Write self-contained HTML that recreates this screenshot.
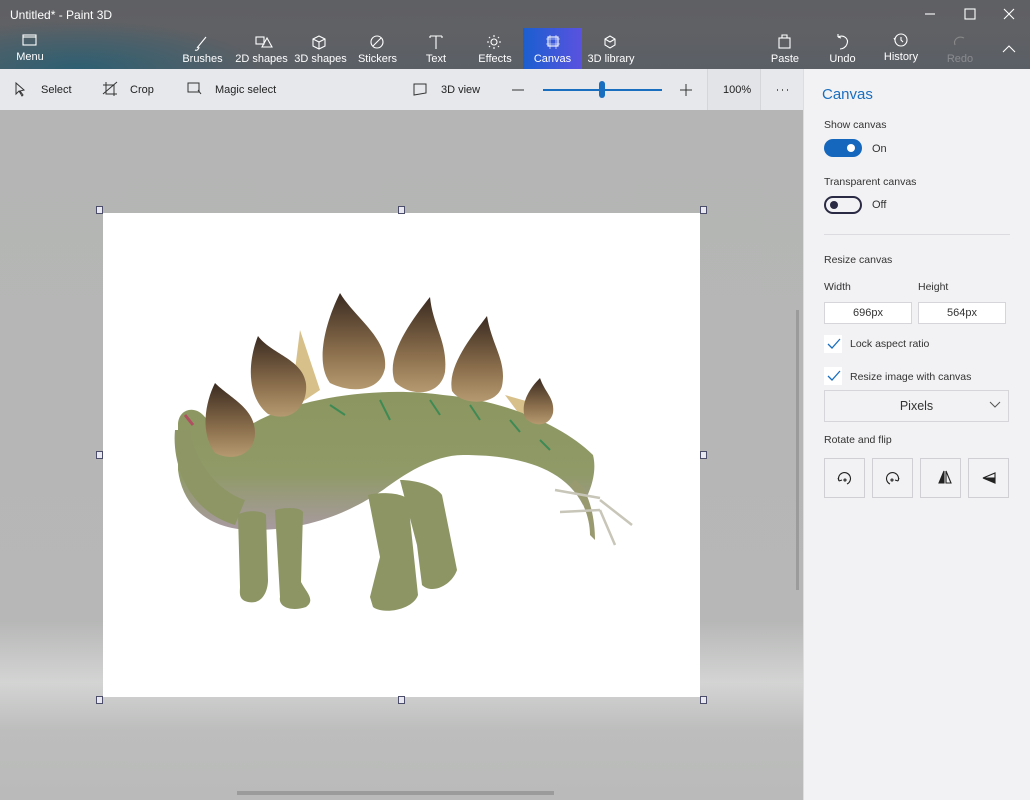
<!DOCTYPE html>
<html><head><meta charset="utf-8"><style>
*{margin:0;padding:0;box-sizing:border-box}
body{width:1030px;height:800px;overflow:hidden;position:relative;font-family:"Liberation Sans",sans-serif;background:#f2f2f4}
.hdr{position:absolute;left:0;top:0;width:1030px;height:69px;background:linear-gradient(180deg,#5f6063 0%,#606164 40%,#5a5f66 100%)}
.hdr:before{content:"";position:absolute;left:0;top:20px;width:260px;height:49px;background:radial-gradient(ellipse at 30% 100%,rgba(40,95,115,.9),rgba(60,85,100,0) 70%)}
.t{position:absolute;color:#fff;font-size:11px;text-align:center}
.ti{position:absolute;left:10px;top:8px;color:#fff;font-size:12px}
.tb{position:absolute;left:0;top:69px;width:803px;height:41px;background:#e6e8ec}
.tt{position:absolute;font-size:11px;color:#222}
.view{position:absolute;left:0;top:110px;width:803px;height:690px;background:linear-gradient(180deg,#b4b5b4 0%,#b6b7b6 74%,#d3d4d3 83%,#bcbdbc 90%,#b9bab9 100%)}
.cv{position:absolute;left:103px;top:213px;width:597px;height:484px;background:#fff}
.h{position:absolute;width:7px;height:8px;border:1.5px solid #4b4d6a;background:#e8e8f0}
.panel{position:absolute;left:803px;top:69px;width:227px;height:731px;background:#f2f2f4;border-left:1px solid #ddd}
.p{position:absolute;font-size:11px;color:#333}
.box{position:absolute;background:#fff;border:1px solid #d6d6da;font-size:11px;color:#333;text-align:center}
.btn{position:absolute;top:458px;width:41px;height:40px;border:1px solid #d0d0d4;background:#f2f2f4}
svg{position:absolute}
</style></head><body>
<div class="hdr"></div>
<div class="ti">Untitled* - Paint 3D</div>
<div style="position:absolute;left:523px;top:28px;width:59px;height:41px;background:linear-gradient(90deg,#1a5fd0,#5a52e0)"></div>
<svg style="left:0;top:0" width="1030" height="69" fill="none" stroke="#fff" stroke-width="1.1">
<rect x="23" y="35" width="13" height="10"/><path d="M23 37h13"/>
<path d="M197 48l9-11M195 50c2 1 4-1 4-3"/>
<rect x="256" y="37" width="8" height="7"/><path d="M262 47l5-9 5 9z"/>
<path d="M313 39l6-3 6 3v7l-6 3-6-3zM313 39l6 3 6-3M319 42v7"/>
<circle cx="377" cy="42" r="6"/><path d="M373 46l8-8"/>
<path d="M430 36h12M436 36v13M430 36v2M442 36v2"/>
<circle cx="494" cy="42" r="3"/><path d="M494 35v2M494 47v2M487 42h2M499 42h2M489 37l1 1M498 46l1 1M489 47l1-1M498 37l1 1"/>
<rect x="548" y="37" width="10" height="9"/><path d="M546 39h14M546 44h14M550 35v14M556 35v14" stroke-width=".6"/>
<path d="M605 39l5-3 5 3v6l-5 3-5-3zM605 39l5 3 5-3" />
<rect x="779" y="38" width="11" height="10"/><path d="M782 38v-3h5v3"/>
<path d="M838 37c6-3 11 2 9 7-1 3-4 5-7 5M838 37l0-3M838 37l3 1"/>
<circle cx="901" cy="40" r="6"/><path d="M901 37v3l2 2M895 40l-1-2"/>
<path d="M964 38c-6-3-11 2-9 7" stroke="#888"/>
<path d="M925 14h10"/><rect x="965" y="9" width="10" height="10"/><path d="M1004 9l10 10M1014 9l-10 10M1003 52l6-6 6 6"/>
</svg>
<div class="t" style="left:10px;top:51px;width:40px">Menu</div>
<div class="t" style="left:180px;top:53px;width:45px">Brushes</div>
<div class="t" style="left:234px;top:53px;width:55px">2D shapes</div>
<div class="t" style="left:293px;top:53px;width:55px">3D shapes</div>
<div class="t" style="left:355px;top:53px;width:45px">Stickers</div>
<div class="t" style="left:420px;top:53px;width:32px">Text</div>
<div class="t" style="left:475px;top:53px;width:40px">Effects</div>
<div class="t" style="left:523px;top:53px;width:59px">Canvas</div>
<div class="t" style="left:585px;top:53px;width:52px">3D library</div>
<div class="t" style="left:765px;top:53px;width:40px">Paste</div>
<div class="t" style="left:825px;top:53px;width:35px">Undo</div>
<div class="t" style="left:880px;top:51px;width:42px">History</div>
<div class="t" style="left:940px;top:53px;width:40px;color:#8a8c90">Redo</div>

<div class="tb"></div>
<div style="position:absolute;left:707px;top:69px;width:54px;height:41px;background:#e2e4e8;border-left:1px solid #d4d6da;border-right:1px solid #d4d6da"></div>
<svg style="left:0;top:69px" width="803" height="41" fill="none" stroke="#333" stroke-width="1">
<path d="M16 14l0 11 3-3 3 5 1-1-3-4 4-1z"/>
<path d="M106 13v12h11M103 16h11v11M103 25l14-12"/>
<rect x="188" y="14" width="11" height="9"/><path d="M198 21l3 4"/>
<path d="M414 15l12 0v9l-12 2z"/>
<path d="M512 21h12M680 21h12M686 15v12"/>
<path d="M543 21h119" stroke="#1a6ec0" stroke-width="2"/>
<rect x="599" y="12" width="6" height="17" rx="3" fill="#1a6ec0" stroke="none"/>
<path d="M777 21h1M782 21h1M787 21h1" stroke-width="1.5"/>
</svg>
<div class="tt" style="left:41px;top:84px">Select</div>
<div class="tt" style="left:130px;top:84px">Crop</div>
<div class="tt" style="left:215px;top:84px">Magic select</div>
<div class="tt" style="left:441px;top:84px">3D view</div>
<div class="tt" style="left:723px;top:84px">100%</div>

<div class="view"></div>
<div style="position:absolute;left:796px;top:310px;width:3px;height:280px;background:#9a9b9a"></div>
<div style="position:absolute;left:237px;top:791px;width:317px;height:4px;background:#9a9b9a"></div>
<div class="cv"></div>
<div class="h" style="left:96px;top:206px"></div><div class="h" style="left:398px;top:206px"></div><div class="h" style="left:700px;top:206px"></div>
<div class="h" style="left:96px;top:451px"></div><div class="h" style="left:700px;top:451px"></div>
<div class="h" style="left:96px;top:696px"></div><div class="h" style="left:398px;top:696px"></div><div class="h" style="left:700px;top:696px"></div>

<svg style="left:0;top:0" width="803" height="800">
<defs><linearGradient id="pl" x1="0" y1="0" x2="0" y2="1"><stop offset="0" stop-color="#3a2a20"/><stop offset=".6" stop-color="#8a6e4c"/><stop offset="1" stop-color="#b59a70"/></linearGradient>
<linearGradient id="bd" x1="0" y1="0" x2="0" y2="1"><stop offset="0" stop-color="#8c9660"/><stop offset=".6" stop-color="#909a68"/><stop offset="1" stop-color="#a89aa0"/></linearGradient></defs>
<path d="M300 330l20 60-30 20zM505 395l35 10-20 10z" fill="#d8c08a"/>
<path d="M178 425c0-15 15-20 25-10 8 8 20 25 40 15 40-30 130-45 200-35 60 5 120 30 150 60 5 20-5 40-10 50-20-40-70-50-120-50-30 0-60 20-80 35-30 20-70 40-130 40-40 0-70-20-75-60z" fill="url(#bd)"/>
<path d="M175 430c-3 30 10 80 60 95l10-25c-30-10-50-40-55-70z" fill="#8e9666"/>
<path d="M238 515c5-5 25-5 28 0l2 65c0 10-5 25-20 22-10-2-8-10-8-15zM275 510c10-3 25-3 28 2l-2 70c5 10 15 18 5 25-15 5-28 0-26-10zM368 495c10-3 35-3 40 5l10 95c-5 15-35 20-45 12l-3-10 10-40zM400 480c15 0 35 5 42 15l15 75c-5 15-25 25-35 15l-5-40z" fill="#8d9564"/>
<path d="M575 480c15 10 20 40 20 60l-5-5c0-20-10-40-20-50z" fill="#9a9a70"/>
<path d="M555 490l45 8M560 512l40-2M600 500l32 25M600 510l15 35" stroke="#c8c6b8" stroke-width="2.5"/>
<path d="M215 383c-10 20-15 50 0 70 20 10 40 0 40-20 0-25-25-35-40-50z" fill="url(#pl)"/>
<path d="M258 336c-10 25-12 60 10 78 25 10 40-10 38-30-3-25-35-30-48-48z" fill="url(#pl)"/>
<path d="M340 293c-15 30-25 70-10 90 20 10 50 10 55-15 3-30-30-50-45-75z" fill="url(#pl)"/>
<path d="M430 297c-20 25-45 60-35 85 15 15 45 15 50-10 3-30-12-45-15-75z" fill="url(#pl)"/>
<path d="M487 316c-15 20-40 50-35 75 10 15 45 15 50-5 5-25-10-40-15-70z" fill="url(#pl)"/>
<path d="M540 378c-10 10-20 25-15 40 10 10 25 8 28-5 2-15-8-20-13-35z" fill="url(#pl)"/>
<path d="M330 405l15 10M380 400l10 20M430 400l10 15M470 405l10 15M510 420l10 12M540 440l10 10" stroke="#3e8a55" stroke-width="2"/>
<path d="M185 415l8 10" stroke="#b05060" stroke-width="3"/>
</svg>

<div class="panel"></div>
<div style="position:absolute;left:822px;top:86px;font-size:15px;color:#1a6ec0">Canvas</div>
<div class="p" style="left:824px;top:119px;font-size:10.5px">Show canvas</div>
<div style="position:absolute;left:824px;top:139px;width:38px;height:18px;border-radius:9px;background:#1467bd"></div>
<div style="position:absolute;left:847px;top:144px;width:8px;height:8px;border-radius:4px;background:#fff"></div>
<div class="p" style="left:872px;top:143px">On</div>
<div class="p" style="left:824px;top:176px;font-size:10.5px">Transparent canvas</div>
<div style="position:absolute;left:824px;top:196px;width:38px;height:18px;border-radius:9px;border:2px solid #2a2a44"></div>
<div style="position:absolute;left:830px;top:201px;width:8px;height:8px;border-radius:4px;background:#2a2a44"></div>
<div class="p" style="left:872px;top:199px">Off</div>
<div style="position:absolute;left:824px;top:234px;width:186px;height:1px;background:#dcdce0"></div>
<div class="p" style="left:824px;top:254px;font-size:10.5px">Resize canvas</div>
<div class="p" style="left:824px;top:281px;font-size:10.5px">Width</div>
<div class="p" style="left:918px;top:281px;font-size:10.5px">Height</div>
<div class="box" style="left:824px;top:302px;width:88px;height:22px;line-height:20px">696px</div>
<div class="box" style="left:918px;top:302px;width:88px;height:22px;line-height:20px">564px</div>
<div style="position:absolute;left:824px;top:335px;width:18px;height:18px;background:#fff"></div>
<div style="position:absolute;left:824px;top:367px;width:18px;height:18px;background:#fff"></div>
<svg style="left:824px;top:335px" width="20" height="52" fill="none" stroke="#1a6ec0" stroke-width="1.3"><path d="M4 9l4 4 8-9M4 41l4 4 8-9"/></svg>
<div class="p" style="left:850px;top:338px;font-size:10.5px">Lock aspect ratio</div>
<div class="p" style="left:850px;top:371px;font-size:10.5px">Resize image with canvas</div>
<div style="position:absolute;left:824px;top:390px;width:185px;height:32px;border:1px solid #d6d6da;font-size:12.5px;color:#333;text-align:center;line-height:30px">Pixels</div>
<svg style="left:988px;top:400px" width="14" height="10" fill="none" stroke="#555"><path d="M2 2l5 5 5-5"/></svg>
<div class="p" style="left:824px;top:434px;font-size:10.5px">Rotate and flip</div>
<div class="btn" style="left:824px"></div><div class="btn" style="left:872px"></div><div class="btn" style="left:920px"></div><div class="btn" style="left:968px"></div>
<svg style="left:824px;top:458px" width="190" height="40" fill="none" stroke="#222" stroke-width="1.1">
<path d="M15 23a6 6 0 1 1 8 3M15 23l-1-3M15 23l3-1"/><circle cx="21" cy="22" r="1"/>
<path d="M74 23a6 6 0 1 0-8 3M74 23l1-3M74 23l-3-1"/><circle cx="68" cy="22" r="1"/>
<path d="M115 25l5-12v12z" fill="#222"/><path d="M122 13v12h5z"/>
<path d="M159 20l12-5v5z"/><path d="M159 20h12v5z" fill="#222"/>
</svg>
</body></html>
